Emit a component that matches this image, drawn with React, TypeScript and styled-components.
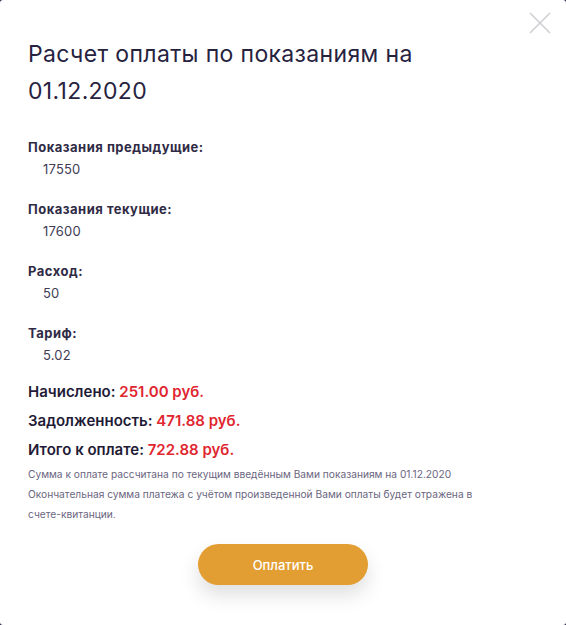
import React from "react";
import styled, { createGlobalStyle } from "styled-components";

const Global = createGlobalStyle`
  html, body { margin: 0; padding: 0; background: #2b2545; }
  body { font-family: Inter, "Open Sans", sans-serif; }
`;

const Modal = styled.div`
  position: relative;
  box-sizing: border-box;
  width: 566px;
  height: 625px;
  background: #fff;
  border-radius: 3px;
  padding: 36px 28px 0 28px;
  color: #27233f;
`;

const Close = styled.button`
  position: absolute;
  top: 11px;
  right: 14px;
  width: 24px;
  height: 24px;
  padding: 0;
  border: 0;
  background: none;
  cursor: pointer;
`;

const Title = styled.h1`
  margin: 0 0 28px 0;
  font-size: 23px;
  line-height: 37px;
  font-weight: 400;
  letter-spacing: 0.35px;
  color: #27233f;
`;

const Field = styled.div`
  display: flex;
  flex-direction: column;
  gap: 3px;
  margin-bottom: 21px;
`;

const Label = styled.div`
  font-size: 13px;
  line-height: 19px;
  font-weight: 700;
  letter-spacing: 0.5px;
  color: #2f2b45;
`;

const Value = styled.div`
  font-size: 13px;
  line-height: 19px;
  letter-spacing: 0.2px;
  color: #403c55;
  padding-left: 15px;
`;

const Totals = styled.div`
  display: flex;
  flex-direction: column;
  gap: 7px;
  margin-top: -5px;
`;

const Total = styled.div`
  font-size: 15px;
  line-height: 22px;
  font-weight: 600;
  color: #1f1b36;
`;

const Amount = styled.span`
  color: #e0262f;
`;

const Note = styled.p`
  margin: 3px 0 0 0;
  font-size: 10.2px;
  line-height: 20px;
  color: #6a6680;
`;

const Actions = styled.div`
  display: flex;
  justify-content: center;
  margin-top: 20px;
`;

const PayButton = styled.button`
  width: 170px;
  height: 41px;
  border: 0;
  border-radius: 21px;
  background: #e39e33;
  color: #fff;
  font-family: inherit;
  font-size: 13px;
  font-weight: 500;
  box-shadow: 0 10px 20px rgba(0, 0, 0, 0.13);
  cursor: pointer;
`;

const fields = [
  { label: "Показания предыдущие:", value: "17550" },
  { label: "Показания текущие:", value: "17600" },
  { label: "Расход:", value: "50" },
  { label: "Тариф:", value: "5.02" },
];

const totals = [
  { label: "Начислено:", value: "251.00 руб." },
  { label: "Задолженность:", value: "471.88 руб." },
  { label: "Итого к оплате:", value: "722.88 руб." },
];

export default function App() {
  return (
    <>
      <Global />
      <Modal>
        <Close aria-label="Закрыть">
          <svg width="24" height="24" viewBox="0 0 24 24">
            <path d="M2 2 L22 22 M22 2 L2 22" stroke="#cfcfd3" strokeWidth="1.6" fill="none" />
          </svg>
        </Close>
        <Title>
          Расчет оплаты по показаниям на
          <br />
          01.12.2020
        </Title>
        {fields.map((f) => (
          <Field key={f.label}>
            <Label>{f.label}</Label>
            <Value>{f.value}</Value>
          </Field>
        ))}
        <Totals>
          {totals.map((t) => (
            <Total key={t.label}>
              {t.label} <Amount>{t.value}</Amount>
            </Total>
          ))}
        </Totals>
        <Note>
          Сумма к оплате рассчитана по текущим введённым Вами показаниям на 01.12.2020
          <br />
          Окончательная сумма платежа с учётом произведенной Вами оплаты будет отражена в
          <br />
          счете-квитанции.
        </Note>
        <Actions>
          <PayButton>Оплатить</PayButton>
        </Actions>
      </Modal>
    </>
  );
}
